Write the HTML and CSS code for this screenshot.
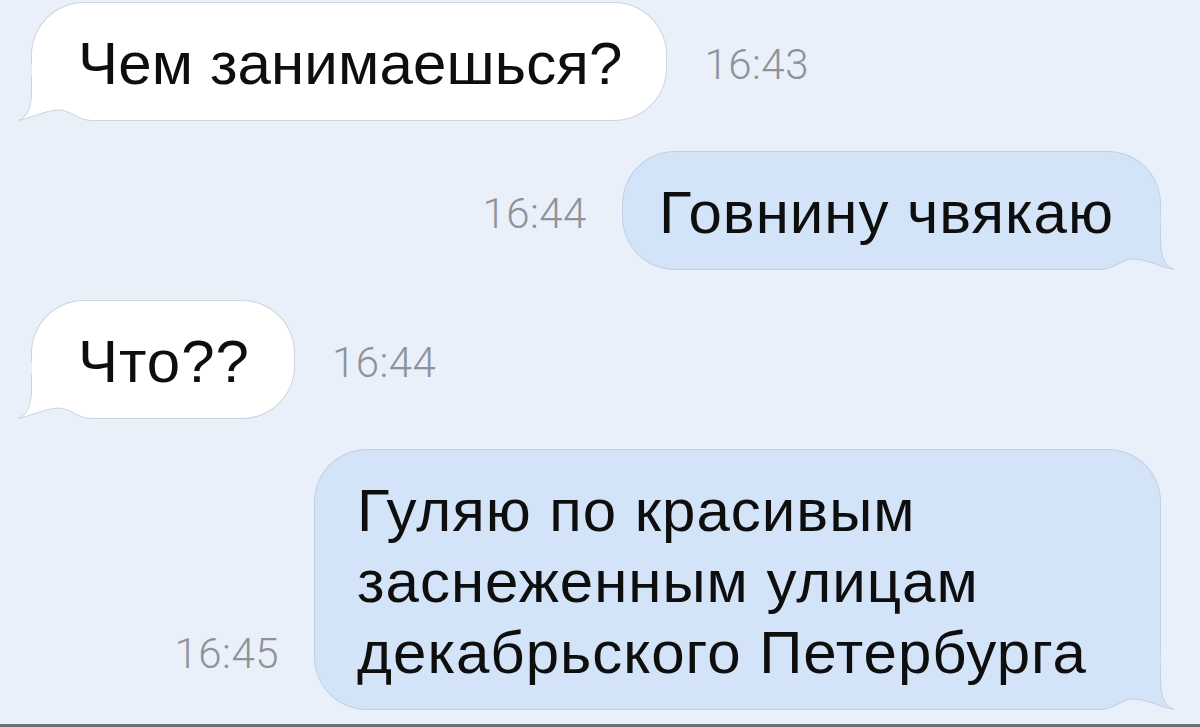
FILE: index.html
```html
<!DOCTYPE html>
<html lang="ru">
<head>
<meta charset="utf-8">
<title>Чат</title>
<link rel="stylesheet" href="styles.css">
</head>
<body>
<div class="screen">
  <div class="chat">
    <div class="row row-in">
      <div class="bubble bubble-in">
        <svg class="tail" width="80" height="60" viewBox="0 0 80 60" aria-hidden="true">
          <rect class="tail-bg" x="17" y="42" width="63" height="18"/>
          <path class="tail-fill" d="M19.5 0 L19.5 28 C19.5 45 14 54 6 56.5 C16 55 34 46 47 46 C58 46 66 56.5 80 56.5 L80 0 Z"/>
          <path class="tail-line" d="M19.5 12 L19.5 28 C19.5 45 14 54 6 56.5 C16 55 34 46 47 46 C58 46 66 56.5 80 56.5"/>
        </svg>
        <span class="msg msg-tight">Чем занимаешься?</span>
      </div>
      <span class="time">16:43</span>
    </div>

    <div class="row row-out">
      <span class="time">16:44</span>
      <div class="bubble bubble-out">
        <svg class="tail" width="80" height="60" viewBox="0 0 80 60" aria-hidden="true">
          <rect class="tail-bg" x="17" y="42" width="63" height="18"/>
          <path class="tail-fill" d="M19.5 0 L19.5 28 C19.5 45 14 54 6 56.5 C16 55 34 46 47 46 C58 46 66 56.5 80 56.5 L80 0 Z"/>
          <path class="tail-line" d="M19.5 12 L19.5 28 C19.5 45 14 54 6 56.5 C16 55 34 46 47 46 C58 46 66 56.5 80 56.5"/>
        </svg>
        <span class="msg">Говнину чвякаю</span>
      </div>
    </div>

    <div class="row row-in">
      <div class="bubble bubble-in">
        <svg class="tail" width="80" height="60" viewBox="0 0 80 60" aria-hidden="true">
          <rect class="tail-bg" x="17" y="42" width="63" height="18"/>
          <path class="tail-fill" d="M19.5 0 L19.5 28 C19.5 45 14 54 6 56.5 C16 55 34 46 47 46 C58 46 66 56.5 80 56.5 L80 0 Z"/>
          <path class="tail-line" d="M19.5 12 L19.5 28 C19.5 45 14 54 6 56.5 C16 55 34 46 47 46 C58 46 66 56.5 80 56.5"/>
        </svg>
        <span class="msg">Что??</span>
      </div>
      <span class="time">16:44</span>
    </div>

    <div class="row row-out">
      <span class="time">16:45</span>
      <div class="bubble bubble-out bubble-long">
        <svg class="tail" width="80" height="60" viewBox="0 0 80 60" aria-hidden="true">
          <rect class="tail-bg" x="17" y="42" width="63" height="18"/>
          <path class="tail-fill" d="M19.5 0 L19.5 28 C19.5 45 14 54 6 56.5 C16 55 34 46 47 46 C58 46 66 56.5 80 56.5 L80 0 Z"/>
          <path class="tail-line" d="M19.5 12 L19.5 28 C19.5 45 14 54 6 56.5 C16 55 34 46 47 46 C58 46 66 56.5 80 56.5"/>
        </svg>
        <span class="msg">Гуляю по красивым<br>заснеженным улицам<br>декабрьского Петербурга</span>
      </div>
    </div>
  </div>
  <div class="bottom-bar"></div>
</div>
</body>
</html>
```

FILE: styles.css
```css
html, body {
  margin: 0;
  padding: 0;
}

body {
  background: #eaf0fa;
  width: 1200px;
  height: 727px;
  overflow: hidden;
  font-family: "Liberation Sans", Arial, sans-serif;
}

.screen {
  display: flex;
  flex-direction: column;
  height: 727px;
}

.chat {
  flex: 1;
  display: flex;
  flex-direction: column;
  gap: 32px;
  padding: 3px 40px 0 32px;
}

.row {
  display: flex;
  align-items: flex-end;
  gap: 38px;
}

.row-out {
  justify-content: flex-end;
  gap: 36px;
}

.bubble {
  position: relative;
  padding: 25px 44px 21px 46px;
  border-radius: 52px;
}

.bubble-in {
  background: #ffffff;
  box-shadow: 0 0 0 1px #cdd4de;
  border-bottom-left-radius: 0;
}

.bubble-out {
  background: #d3e4f9;
  box-shadow: 0 0 0 1px #bfd0e6;
  border-bottom-right-radius: 0;
  padding: 25px 46px 21px 36px;
}

.bubble-long {
  box-sizing: border-box;
  width: 845px;
  padding-left: 42px;
}

.msg {
  position: relative;
  display: block;
  font-size: 60px;
  letter-spacing: 1px;
  line-height: 71px;
  color: #0e0e0e;
  white-space: nowrap;
}

.msg-tight {
  letter-spacing: 0.15px;
}

.tail {
  position: absolute;
  bottom: -4px;
  left: -20px;
  display: block;
}

.bubble-out .tail {
  left: auto;
  right: -20px;
  transform: scaleX(-1);
}

.tail-bg {
  fill: #eaf0fa;
}

.tail-line {
  fill: none;
  stroke-width: 1;
}

.bubble-in .tail-fill {
  fill: #ffffff;
}

.bubble-in .tail-line {
  stroke: #cdd4de;
}

.bubble-out .tail-fill {
  fill: #d3e4f9;
}

.bubble-out .tail-line {
  stroke: #bfd0e6;
}

.time {
  font-family: Roboto, "Liberation Sans", sans-serif;
  font-weight: 300;
  font-size: 42px;
  letter-spacing: 0.5px;
  line-height: 40px;
  color: #8e939a;
  margin-bottom: 35px;
  white-space: nowrap;
}

.bottom-bar {
  height: 3px;
  background: #6d7279;
}
```
